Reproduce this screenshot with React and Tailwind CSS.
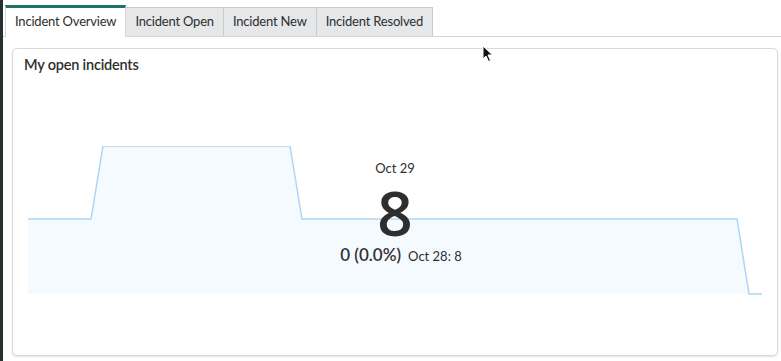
import React from 'react';

const tabs = ['Incident Overview', 'Incident Open', 'Incident New', 'Incident Resolved'];

function Chart() {
  const pts = '0,73 63,73 75,0 262,0 274,73 709,73 721,148 734,148';
  return (
    <svg width="734" height="149" viewBox="0 0 734 149" className="block">
      <polygon points={`${pts} 734,148 0,148`} fill="#f5faff" />
      <polyline points={pts} fill="none" stroke="#aed6f4" strokeWidth="1.5" />
    </svg>
  );
}

export default function App() {
  return (
    <div
      className="flex h-[361px] w-[781px] bg-white overflow-hidden"
      style={{ fontFamily: 'Lato, "Open Sans", sans-serif' }}
    >
      <div className="w-[3px] bg-[#26302f] shrink-0" />
      <div className="relative flex-1 flex flex-col pt-[5px]">
        <div className="flex items-end pl-[2px] border-b border-[#d4d6d8] h-[32px]">
          {tabs.map((t, i) => (
            <div
              key={t}
              className={
                i === 0
                  ? 'h-[32px] px-[9px] flex items-center border-t-[3px] border-t-[#1d7566] border-x border-x-[#d4d6d8] bg-white text-[13px] tracking-[-0.2px] text-[#2e2e2e] -mb-px pb-[1px]'
                  : 'h-[29px] px-[9px] flex items-center border-t border-r border-[#c9cbcd] bg-[#e5e7e9] text-[13px] tracking-[-0.2px] text-[#2e2e2e]'
              }
            >
              {t}
            </div>
          ))}
        </div>
        <div className="mt-[11px] ml-[9px] mr-[3px] h-[308px] rounded-[5px] border border-[#dadada] shadow-[0_1px_2px_rgba(0,0,0,0.12)] bg-white flex flex-col">
          <div className="pl-[11px] pt-[5px] text-[14.5px] font-semibold tracking-[-0.2px] text-[#2e2e2e]">My open incidents</div>
          <div className="relative mt-[70px] ml-[15px]">
            <Chart />
            <div className="absolute left-[282px] top-[13px] w-[170px] flex flex-col items-center text-[#2e2e2e]">
              <div className="text-[13px] leading-[18px]">Oct 29</div>
              <div
                className="text-[62px] leading-[52px] mt-[9px] font-semibold"
                style={{ fontFamily: '"Open Sans", sans-serif' }}
              >
                8
              </div>
              <div className="flex items-baseline gap-[7px] mt-[5px] ml-[12px] leading-[24px]">
                <span className="text-[17px] font-semibold text-[#333]">0 (0.0%)</span>
                <span className="text-[13px]">Oct 28: 8</span>
              </div>
            </div>
          </div>
        </div>
        <svg className="absolute left-[479px] top-[45px]" width="12" height="18" viewBox="0 0 12 18">
          <path d="M1 1 L1 14 L4 11 L6.5 16.5 L8.5 15.5 L6 10 L10.5 10 Z" fill="#111" stroke="#fff" strokeWidth="1" />
        </svg>
      </div>
    </div>
  );
}
